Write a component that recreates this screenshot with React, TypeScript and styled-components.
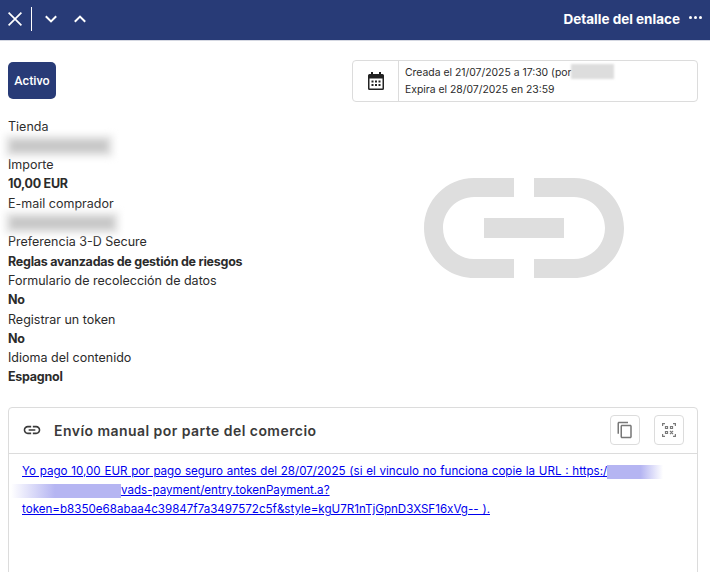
import React from 'react';
import styled, {createGlobalStyle} from "styled-components";

const navy = "#283b77";

const GlobalStyle = createGlobalStyle`
  html, body {
    margin: 0;
    height: 100%;
    overflow: hidden;
    background: #fff;
  }
  body {
    font-family: Inter, "Liberation Sans", sans-serif;
    font-size: 12.5px;
    color: #2b2b2b;
  }
`

const infoRows = [
    {label: "Tienda", blur: 98},
    {label: "Importe", value: "10,00 EUR"},
    {label: "E-mail comprador", blur: 104},
    {label: "Preferencia 3-D Secure", value: "Reglas avanzadas de gestión de riesgos"},
    {label: "Formulario de recolección de datos", value: "No"},
    {label: "Registrar un token", value: "No"},
    {label: "Idioma del contenido", value: "Espagnol"},
];

export default function App() {
    return (
        <Page>
            <GlobalStyle/>
            <TopBar>
                <CloseButton aria-label="Cerrar">
                    <svg width="14" height="14" viewBox="0 0 14 14" fill="none" stroke="#fff" strokeWidth="1.7">
                        <path d="M.6.6l12.8 12.8M13.4.6L.6 13.4"/>
                    </svg>
                </CloseButton>
                <TopDivider/>
                <DownButton aria-label="Siguiente">
                    <svg width="12" height="8" viewBox="0 0 12 8" fill="none" stroke="#fff" strokeWidth="2">
                        <path d="M.8 1.2L6 6.4l5.2-5.2"/>
                    </svg>
                </DownButton>
                <UpButton aria-label="Anterior">
                    <svg width="12" height="8" viewBox="0 0 12 8" fill="none" stroke="#fff" strokeWidth="2">
                        <path d="M.8 6.8L6 1.6l5.2 5.2"/>
                    </svg>
                </UpButton>
                <TopTitle>Detalle del enlace</TopTitle>
                <MoreDots>
                    <Dot/><Dot/><Dot/>
                </MoreDots>
            </TopBar>

            <Content>
                <StatusRow>
                    <StatusBadge>Activo</StatusBadge>
                    <DateBox>
                        <DateIcon>
                            <svg width="16" height="18" viewBox="0 0 16 18" fill="#222" fillRule="evenodd">
                                <path d="M3 0h2v2h6V0h2v2h1.500A1.500 1.500 0 0 1 16 3.500V16.500A1.500 1.500 0 0 1 14.500 18H1.500A1.500 1.500 0 0 1 0 16.500V3.500A1.500 1.500 0 0 1 1.500 2H3zM1.500 6.500V16.500H14.500V6.500z"/>
                                <path d="M3.500 8.500h2v2h-2zM7 8.500h2v2H7zM10.500 8.500h2v2h-2zM3.500 12h2v2h-2zM7 12h2v2H7zM10.500 12h2v2h-2z"/>
                            </svg>
                        </DateIcon>
                        <DateText>
                            <DateLine>Creada el 21/07/2025 a 17:30 (por<GreyBlur/></DateLine>
                            <DateLine>Expira el 28/07/2025 en 23:59</DateLine>
                        </DateText>
                    </DateBox>
                </StatusRow>

                <DetailRow>
                    <InfoList>
                        {infoRows.map(row => (
                            <React.Fragment key={row.label}>
                                <InfoLabel>{row.label}</InfoLabel>
                                {row.value
                                    ? <InfoValue>{row.value}</InfoValue>
                                    : <InfoBlurRow><InfoBlur style={{width: row.blur}}/></InfoBlurRow>}
                            </React.Fragment>
                        ))}
                    </InfoList>
                    <Watermark>
                        <svg width="200" height="100" viewBox="2 7 20 10" fill="#dedede">
                            <path d="M3.9 12c0-1.71 1.39-3.1 3.1-3.1h4V7H7c-2.76 0-5 2.24-5 5s2.24 5 5 5h4v-1.9H7c-1.71 0-3.1-1.39-3.1-3.1zM8 13h8v-2H8v2zm9-6h-4v1.9h4c1.71 0 3.1 1.39 3.1 3.1s-1.39 3.1-3.1 3.1h-4V17h4c2.76 0 5-2.24 5-5s-2.24-5-5-5z"/>
                        </svg>
                    </Watermark>
                </DetailRow>

                <Card>
                    <CardHeader>
                        <svg width="20" height="20" viewBox="0 0 24 24" fill="#3a3a3a">
                            <path d="M3.9 12c0-1.71 1.39-3.1 3.1-3.1h4V7H7c-2.76 0-5 2.24-5 5s2.24 5 5 5h4v-1.9H7c-1.71 0-3.1-1.39-3.1-3.1zM8 13h8v-2H8v2zm9-6h-4v1.9h4c1.71 0 3.1 1.39 3.1 3.1s-1.39 3.1-3.1 3.1h-4V17h4c2.76 0 5-2.24 5-5s-2.24-5-5-5z"/>
                        </svg>
                        <CardTitle>Envío manual por parte del comercio</CardTitle>
                        <CardAction aria-label="Copiar">
                            <svg width="18" height="18" viewBox="0 0 24 24" fill="#777">
                                <path d="M16 1H4c-1.100 0-2 .9-2 2v14h2V3h12V1zm3 4H8c-1.100 0-2 .9-2 2v14c0 1.100.9 2 2 2h11c1.100 0 2-.9 2-2V7c0-1.100-.9-2-2-2zm0 16H8V7h11v14z"/>
                            </svg>
                        </CardAction>
                        <CardAction aria-label="Código QR">
                            <svg width="14" height="14" viewBox="0 0 14 14" fill="none" stroke="#7a7a7a" strokeWidth="1.2">
                                <path d="M.6 3V.6H3M11 .6h2.400V3M.6 11v2.400H3M13.400 11v2.400H11"/>
                                <path d="M3.500 3.500h2v2h-2zM8.500 3.500h2v2h-2zM3.500 8.500h2v2h-2zM8 8l3 3M11 8l-3 3"/>
                            </svg>
                        </CardAction>
                    </CardHeader>
                    <CardBody>
                        <PayLink href="#">
                            Yo pago 10,00 EUR por pago seguro antes del 28/07/2025 (si el vinculo no funciona copie la URL : https:/<LinkBlur $width={56} $fade="right"/>
                            <br/>
                            <LinkBlur $width={110} $fade="left" $pullLeft/>vads-payment/entry.tokenPayment.a?
                            <br/>
                            token=b8350e68abaa4c39847f7a3497572c5f&amp;style=kgU7R1nTjGpnD3XSF16xVg-- ).
                        </PayLink>
                    </CardBody>
                </Card>
            </Content>
        </Page>
    );
}

const Page = styled.div`
  width: 710px;
  height: 572px;
  overflow: hidden;
`
const TopBar = styled.header`
  display: flex;
  align-items: center;
  height: 41px;
  padding: 0 8px 2px 8px;
  box-sizing: border-box;
  background: ${navy};
  border-bottom: 1px solid #d5d8e2;
`
const CloseButton = styled.span`
  display: flex;
  width: 14px;
`
const TopDivider = styled.span`
  width: 1px;
  height: 24px;
  margin-left: 9px;
  background: #fff;
`
const DownButton = styled.span`
  display: flex;
  width: 12px;
  margin-left: 13px;
`
const UpButton = styled(DownButton)`
  margin-left: 17px;
`
const TopTitle = styled.span`
  margin-left: auto;
  font-size: 13.5px;
  font-weight: 700;
  color: #fff;
`
const MoreDots = styled.span`
  display: flex;
  gap: 2px;
  margin-left: 9px;
  margin-bottom: 3px;
`
const Dot = styled.i`
  width: 3px;
  height: 3px;
  border-radius: 50%;
  background: #fff;
`
const Content = styled.main`
  padding: 19px 12px 0 8px;
`
const StatusRow = styled.div`
  display: flex;
  justify-content: space-between;
  align-items: flex-start;
`
const StatusBadge = styled.span`
  display: flex;
  align-items: center;
  justify-content: center;
  width: 48px;
  height: 37px;
  margin-top: 2px;
  border-radius: 5px;
  background: ${navy};
  color: #fff;
  font-family: Roboto, sans-serif;
  font-size: 12.5px;
  font-weight: 500;
`
const DateBox = styled.div`
  display: flex;
  width: 346px;
  height: 42px;
  box-sizing: border-box;
  border: 1px solid #dcdcdc;
  border-radius: 4px;
`
const DateIcon = styled.div`
  display: flex;
  align-items: center;
  justify-content: center;
  width: 45px;
  border-right: 1px solid #dcdcdc;
`
const DateText = styled.div`
  padding: 3px 0 0 6px;
`
const DateLine = styled.div`
  display: flex;
  height: 17px;
  line-height: 17px;
  font-size: 10.4px;
`
const GreyBlur = styled.span`
  display: block;
  width: 43px;
  height: 15px;
  background: #ddd;
  filter: blur(1px);
`
const DetailRow = styled.div`
  display: flex;
  margin-top: 14.6px;
`
const InfoList = styled.div`
  width: 342px;
`
const InfoLabel = styled.div`
  height: 19.3px;
  line-height: 19.3px;
`
const InfoValue = styled(InfoLabel)`
  font-weight: 700;
  letter-spacing: -0.25px;
`
const InfoBlurRow = styled(InfoLabel)`
  display: flex;
  align-items: center;
`
const InfoBlur = styled.span`
  display: block;
  margin-left: 2px;
  height: 12px;
  background: #c6c6c6;
  box-shadow: 0 0 0 5px #e8e8e8;
  filter: blur(3.5px);
`
const Watermark = styled.div`
  flex: 1;
  display: flex;
  justify-content: center;
  padding-top: 61.4px;
`
const Card = styled.section`
  margin-top: 20.4px;
  height: 300px;
  border: 1px solid #dcdcdc;
  border-radius: 4px;
`
const CardHeader = styled.div`
  display: flex;
  align-items: center;
  box-sizing: border-box;
  height: 46px;
  padding: 0 13px 1px;
  border-bottom: 1px solid #dcdcdc;
`
const CardTitle = styled.h2`
  margin: 0 auto 0 12px;
  font-size: 14px;
  font-weight: 600;
  letter-spacing: 0.45px;
  color: #3a3a3a;
`
const CardAction = styled.span`
  display: flex;
  align-items: center;
  justify-content: center;
  width: 30px;
  height: 30px;
  box-sizing: border-box;
  margin-left: 14px;
  border: 1px solid #dcdcdc;
  border-radius: 4px;
`
const CardBody = styled.div`
  padding: 8px 13px;
  line-height: 19px;
  font-size: 11.6px;
  word-spacing: 0.5px;
`
const PayLink = styled.a`
  color: #0000ee;
`
const LinkBlur = styled.span<{$width: number; $fade: "left" | "right"; $pullLeft?: boolean}>`
  display: inline-block;
  vertical-align: middle;
  width: ${props => props.$width}px;
  height: 14px;
  margin-left: ${props => props.$pullLeft ? "-11px" : "0"};
  background: linear-gradient(to ${props => props.$fade}, #b5b5f2 60%, #ffffff);
`
